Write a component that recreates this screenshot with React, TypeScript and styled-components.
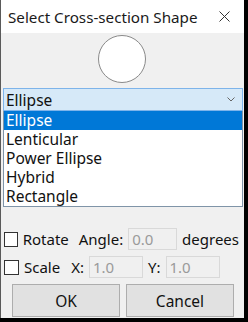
import React from "react";
import styled, { createGlobalStyle } from "styled-components";

const Global = createGlobalStyle`
  html, body { margin: 0; padding: 0; background: #000; }
  body { font-family: "Noto Sans", "Open Sans", sans-serif; }
  * { box-sizing: border-box; }
`;

const Page = styled.div`
  width: 248px;
  height: 322px;
  background: #000;
`;

const Window = styled.div`
  width: 244px;
  height: 318px;
  background: #f0f0f0;
  border-left: 1px solid #5a5a5a;
  display: flex;
  flex-direction: column;
`;

const TitleBar = styled.div`
  height: 33px;
  background: #fff;
  display: flex;
  align-items: center;
  justify-content: space-between;
  padding: 0 14px 0 7px;
`;

const Title = styled.span`
  font-size: 15.2px;
  color: #1a1a1a;
`;

const Close = styled.svg`
  width: 11px;
  height: 11px;
`;

const Content = styled.div`
  display: flex;
  flex-direction: column;
  padding: 0 0 0 2px;
  flex: 1;
`;

const Preview = styled.div`
  height: 55px;
  display: flex;
  justify-content: center;
  padding-top: 2px;
  padding-right: 4px;
`;

const Circle = styled.div`
  width: 48px;
  height: 48px;
  border-radius: 50%;
  background: #fff;
  border: 1px solid #8a8a8a;
`;

const Combo = styled.div`
  width: 240px;
  height: 23px;
  background: #d6e9f8;
  border: 1px solid #7eb4ea;
  display: flex;
  align-items: center;
  justify-content: space-between;
  padding: 0 7px 0 2px;
  font-size: 15.5px;
  color: #111;
`;

const Chevron = styled.svg`
  width: 8px;
  height: 5px;
`;

const List = styled.div`
  width: 240px;
  height: 96px;
  background: #fff;
  border: 1px solid #7f94a8;
  border-top: none;
  display: flex;
  flex-direction: column;
`;

const Item = styled.div<{ $selected?: boolean }>`
  height: 19px;
  line-height: 19px;
  padding-left: 2px;
  font-size: 15.5px;
  color: ${(p) => (p.$selected ? "#fff" : "#111")};
  background: ${(p) => (p.$selected ? "#0078d7" : "transparent")};
`;

const Options = styled.div`
  display: flex;
  flex-direction: column;
  gap: 6px;
  margin-top: 21px;
  font-size: 15px;
  color: #111;
`;

const Row = styled.div`
  display: flex;
  align-items: center;
  height: 22px;
`;

const Check = styled.span`
  width: 15px;
  height: 15px;
  border: 1px solid #333;
  background: #fff;
  margin-right: 5px;
  margin-left: 1px;
`;

const Label = styled.span<{ $ml?: number }>`
  margin-left: ${(p) => p.$ml ?? 0}px;
  margin-right: 5px;
`;

const Field = styled.div<{ $w: number }>`
  width: ${(p) => p.$w}px;
  height: 22px;
  border: 1px solid #d9d9d9;
  background: #f0f0f0;
  color: #9a9a9a;
  display: flex;
  align-items: center;
  padding-left: 3px;
  margin-right: 5px;
`;

const Buttons = styled.div`
  display: flex;
  gap: 6px;
  margin-top: 6px;
  padding-left: 9px;
`;

const Button = styled.div`
  width: 108px;
  height: 33px;
  background: #e1e1e1;
  border: 1px solid #adadad;
  display: flex;
  align-items: center;
  justify-content: center;
  font-size: 15.5px;
  color: #111;
`;

const items = ["Ellipse", "Lenticular", "Power Ellipse", "Hybrid", "Rectangle"];

export default function App() {
  return (
    <Page>
      <Global />
      <Window>
        <TitleBar>
          <Title>Select Cross-section Shape</Title>
          <Close viewBox="0 0 11 11">
            <path d="M0.5 0.5 L10.5 10.5 M10.5 0.5 L0.5 10.5" stroke="#333" strokeWidth="1" />
          </Close>
        </TitleBar>
        <Content>
          <Preview>
            <Circle />
          </Preview>
          <Combo>
            <span>Ellipse</span>
            <Chevron viewBox="0 0 8 5">
              <path d="M0.5 0.5 L4 4 L7.5 0.5" fill="none" stroke="#666" strokeWidth="1" />
            </Chevron>
          </Combo>
          <List>
            {items.map((it, i) => (
              <Item key={it} $selected={i === 0}>
                {it}
              </Item>
            ))}
          </List>
          <Options>
            <Row>
              <Check />
              <Label>Rotate</Label>
              <Label $ml={5}>Angle:</Label>
              <Field $w={54}>0.0</Field>
              <Label>degrees</Label>
            </Row>
            <Row>
              <Check />
              <Label>Scale</Label>
              <Label $ml={6}>X:</Label>
              <Field $w={54}>1.0</Field>
              <Label>Y:</Label>
              <Field $w={54}>1.0</Field>
            </Row>
          </Options>
          <Buttons>
            <Button>OK</Button>
            <Button>Cancel</Button>
          </Buttons>
        </Content>
      </Window>
    </Page>
  );
}
